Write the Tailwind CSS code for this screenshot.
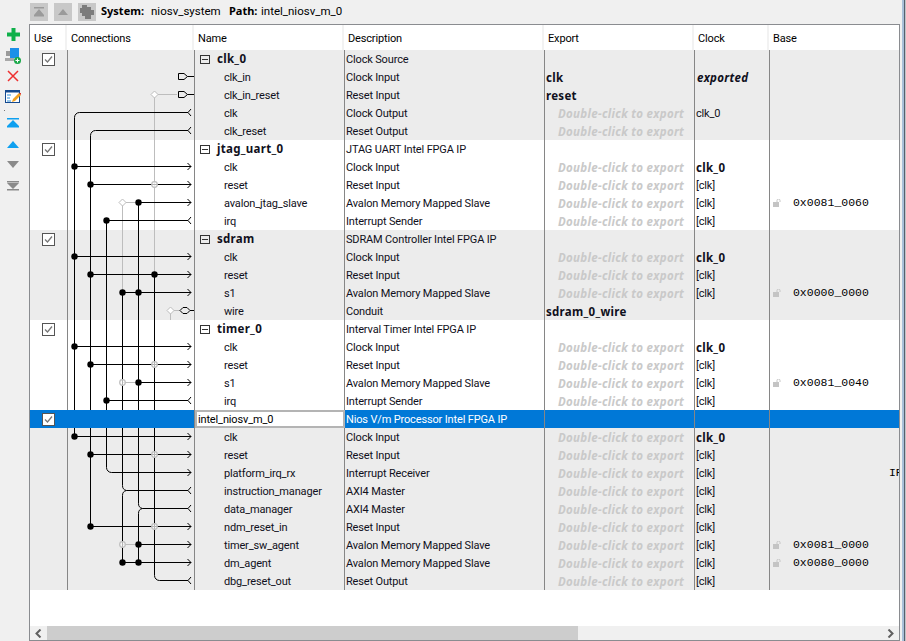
<!DOCTYPE html>
<html>
<head>
  <meta charset="utf-8" />
  <title>System Contents</title>
  <script src="https://cdn.jsdelivr.net/npm/@tailwindcss/browser@4"></script>
</head>
<body class="w-[906px] h-[641px] overflow-hidden bg-[#f0f0f0] font-['Roboto',sans-serif] text-[11px] tracking-[-0.150px] text-[#101020]">
  <!-- top toolbar -->
  <div class="h-[24px] pl-[30px] flex items-center gap-[6px]">
    <div class="w-[18px] h-[18px] bg-[#c8c8c8] flex items-center justify-center">
      <svg width="12" height="10" viewBox="0 0 12 10"><path d="M1 0h10v1.500H1zM6 2l5 6H1zM1 8h10v1.500H1z" fill="#9a9a9a"/></svg>
    </div>
    <div class="w-[18px] h-[18px] bg-[#c8c8c8] flex items-center justify-center">
      <svg width="12" height="8" viewBox="0 0 12 8"><path d="M6 1l5 6H1z" fill="#9a9a9a"/></svg>
    </div>
    <div class="w-[18px] h-[18px] bg-[#c8c8c8] flex items-center justify-center">
      <svg width="16" height="16" viewBox="0 0 16 16"><path d="M3 1h5v2h4v3h3v5h-3v4H6v-3H3V9H1V4h2z" fill="#7c7c7c"/></svg>
    </div>
    <div class="ml-[-1px] flex text-black text-[11.500px] tracking-[0px]">
      <span class="font-['Noto_Sans',sans-serif] text-[11px] font-bold w-[50px]">System:</span><span class="w-[78px]">niosv_system</span>
      <span class="font-['Noto_Sans',sans-serif] text-[11px] font-bold w-[32px]">Path:</span><span>intel_niosv_m_0</span>
    </div>
  </div>
  <div class="flex">
    <!-- left toolbar -->
    <div class="w-[29px] flex flex-col items-center pr-[2px] h-[617px]">
      <svg class="mt-[4px]" width="13" height="13" viewBox="0 0 13 13"><path d="M4.500 0h4v4.500H13v4H8.500V13h-4V8.500H0v-4h4.500z" fill="#0fb04a"/></svg>
      <svg class="mt-[7px]" width="16" height="16" viewBox="0 0 16 16"><rect x="0" y="10" width="9" height="3" fill="#a8a8a8"/><rect x="1" y="3" width="4" height="5" fill="#9a9a9a"/><rect x="5" y="0" width="9" height="10" fill="#1a90e8"/><circle cx="12.500" cy="12.500" r="3.500" fill="#18a848"/><path d="M10.500 12.500h4M12.500 10.500v4" stroke="#fff"/></svg>
      <svg class="mt-[6px]" width="12" height="12" viewBox="0 0 12 12"><path d="M1 1l10 10M11 1L1 11" stroke="#ee3030" stroke-width="1.500"/></svg>
      <svg class="mt-[8px]" width="16" height="14" viewBox="0 0 16 14"><rect x="0.500" y="0.500" width="14" height="12" fill="#fff" stroke="#14498f"/><rect x="0" y="0" width="15" height="2.500" fill="#14498f"/><path d="M2 5h4M2 8h3M2 11h4" stroke="#2a8cd8"/><path d="M7 12l1-3 6-6 2 2-6 6z" fill="#f0a020"/><path d="M14 3l2 2 0-2z" fill="#e03030"/></svg>
      <div class="mt-[6px] mr-[17px] w-[1px] h-[1px] bg-[#777]"></div>
      <svg class="mt-[7px]" width="12" height="10" viewBox="0 0 12 10"><path d="M0 0h12v1.500H0zM6 2l6 6H0zM0 8h12v1.500H0z" fill="#0ea0f0"/></svg>
      <svg class="mt-[13px]" width="12" height="7" viewBox="0 0 12 7"><path d="M6 0l6 7H0z" fill="#0ea0f0"/></svg>
      <svg class="mt-[13px]" width="12" height="7" viewBox="0 0 12 7"><path d="M0 0h12L6 7z" fill="#8a8a8a"/></svg>
      <svg class="mt-[13px]" width="12" height="10" viewBox="0 0 12 10"><path d="M0 0h12v1.500H0zM0 2h12L6 8zM0 8h12v1.500H0z" fill="#8a8a8a"/></svg>
    </div>
    <!-- table frame -->
    <div class="w-[872px] h-[617px] border border-[#8a8c90] bg-white flex flex-col overflow-hidden">
      <div class="h-[25px] grid grid-cols-[37px_127px_150px_200px_150px_75px_1fr] text-black">
        <div class="pl-[4px] leading-[28px] border-r-2 border-[#f2f2f2]">Use</div>
        <div class="pl-[4px] leading-[28px] border-r-2 border-[#f2f2f2]">Connections</div>
        <div class="pl-[4px] leading-[28px] border-r-2 border-[#f2f2f2]">Name</div>
        <div class="pl-[4px] leading-[28px] border-r-2 border-[#f2f2f2]">Description</div>
        <div class="pl-[4px] leading-[28px] border-r-2 border-[#f2f2f2]">Export</div>
        <div class="pl-[4px] leading-[28px] border-r-2 border-[#f2f2f2]">Clock</div>
        <div class="pl-[4px] leading-[28px]">Base</div>
      </div>
      <div class="relative h-[540px]">
        <div id="rows"></div>
        <svg id="wires" class="absolute left-[37px] top-0" width="127" height="540" viewBox="68 50 127 540"></svg>
      </div>
      <div class="flex-1"></div>
      <!-- horizontal scrollbar -->
      <div class="h-[14px] bg-[#f0f0f0] flex items-center">
        <div class="w-[17px] flex justify-center"><svg width="7" height="9" viewBox="0 0 7 9"><path d="M5.500 0.500L1.500 4.500l4 4" fill="none" stroke="#606060" stroke-width="2"/></svg></div>
        <div class="w-[531px] h-[14px] bg-[#cdcdcd]"></div>
        <div class="ml-auto w-[17px] flex justify-center"><svg width="7" height="9" viewBox="0 0 7 9"><path d="M1.500 0.500L5.500 4.500l-4 4" fill="none" stroke="#606060" stroke-width="2"/></svg></div>
      </div>
    </div>
    <!-- window edge -->
    <div class="w-[2px] ml-[2px] h-[641px] mt-[-24px] bg-[#a9c0d9]"></div>
    <div class="w-[1px] h-[641px] mt-[-24px] bg-[#55606e]"></div>
    <div class="w-[1px] h-[641px] mt-[-24px] bg-[#c0c4c8]"></div>
  </div>

  <script>
    const groups = [
      ['clk_0', 'Clock Source', [
        ['clk_in', 'Clock Input', 'clk', 'exported'],
        ['clk_in_reset', 'Reset Input', 'reset', ''],
        ['clk', 'Clock Output', '', 'clk_0'],
        ['clk_reset', 'Reset Output', '', '']]],
      ['jtag_uart_0', 'JTAG UART Intel FPGA IP', [
        ['clk', 'Clock Input', '', 'bold'],
        ['reset', 'Reset Input', '', '[clk]'],
        ['avalon_jtag_slave', 'Avalon Memory Mapped Slave', '', '[clk]', '0x0081_0060'],
        ['irq', 'Interrupt Sender', '', '[clk]']]],
      ['sdram', 'SDRAM Controller Intel FPGA IP', [
        ['clk', 'Clock Input', '', 'bold'],
        ['reset', 'Reset Input', '', '[clk]'],
        ['s1', 'Avalon Memory Mapped Slave', '', '[clk]', '0x0000_0000'],
        ['wire', 'Conduit', 'sdram_0_wire', '']]],
      ['timer_0', 'Interval Timer Intel FPGA IP', [
        ['clk', 'Clock Input', '', 'bold'],
        ['reset', 'Reset Input', '', '[clk]'],
        ['s1', 'Avalon Memory Mapped Slave', '', '[clk]', '0x0081_0040'],
        ['irq', 'Interrupt Sender', '', '[clk]']]],
      ['intel_niosv_m_0', 'Nios V/m Processor Intel FPGA IP', [
        ['clk', 'Clock Input', '', 'bold'],
        ['reset', 'Reset Input', '', '[clk]'],
        ['platform_irq_rx', 'Interrupt Receiver', '', '[clk]', '', 'IRQ 0'],
        ['instruction_manager', 'AXI4 Master', '', '[clk]'],
        ['data_manager', 'AXI4 Master', '', '[clk]'],
        ['ndm_reset_in', 'Reset Input', '', '[clk]'],
        ['timer_sw_agent', 'Avalon Memory Mapped Slave', '', '[clk]', '0x0081_0000'],
        ['dm_agent', 'Avalon Memory Mapped Slave', '', '[clk]', '0x0080_0000'],
        ['dbg_reset_out', 'Reset Output', '', '[clk]']]],
    ];

    const rowCls = 'h-[18px] leading-[18px] grid grid-rows-[18px] grid-cols-[38px_127px_150px_200px_150px_75px_1fr]';
    const lineCls = 'border-r border-[#868686]';
    const boldCls = "font-['Noto_Sans',sans-serif] text-[11.500px] font-bold tracking-[0.300px]";
    const monoCls = "font-['Liberation_Mono',monospace] text-[11.500px] tracking-[0px] text-black";
    const lock = `<svg class="absolute left-[3px] top-[5px]" width="9" height="8" viewBox="0 0 9 8"><rect x="0" y="3" width="6" height="5" fill="#c4c4c4"/><path d="M4 3V1.500a1.500 1.500 0 0 1 3 0V3" fill="none" stroke="#c4c4c4"/></svg>`;

    function checkbox() {
      return `<div class="w-[13px] h-[13px] border border-[#555] bg-white flex items-center justify-center"><svg width="11" height="11" viewBox="0 0 11 11"><path d="M2 5.500l2.500 2.500L9 2.500" fill="none" stroke="#777" stroke-width="1.300"/></svg></div>`;
    }

    function subRow(r, shade) {
      const clock = r[3] === 'bold' ? `<span class="${boldCls}">clk_0</span>`
        : r[3] === 'exported' ? `<span class="${boldCls} italic pl-[1px]">exported</span>` : r[3];
      const exp = r[2] ? `<span class="${boldCls}">${r[2]}</span>`
        : `<span class="${boldCls} pl-[12px] italic text-[#c9c9c9]">Double-click to export</span>`;
      let base = '';
      if (r[4]) base = lock + `<span class="absolute left-[23px] ${monoCls}">${r[4]}</span>`;
      if (r[5]) base = `<span class="absolute left-[119px] ${monoCls} whitespace-nowrap">${r[5]}</span>`;
      return `<div class="${rowCls} ${shade}">
        <div class="${lineCls}"></div><div class="${lineCls}"></div>
        <div class="${lineCls} pl-[29px] pt-[1px]">${r[0]}</div>
        <div class="${lineCls} pl-[1px] pt-[1px]">${r[1]}</div>
        <div class="${lineCls} pl-[1px] pt-[1px]">${exp}</div>
        <div class="${lineCls} pl-[1px] pt-[1px]">${clock}</div>
        <div class="relative overflow-hidden">${base}</div>
      </div>`;
    }

    function headRow(g, shade) {
      return `<div class="${rowCls} ${shade}">
        <div class="${lineCls} flex items-center justify-center">${checkbox()}</div><div class="${lineCls}"></div>
        <div class="${lineCls} flex items-center pl-[5px]">
          <div class="w-[10px] h-[9px] border border-[#333] flex items-center justify-center"><div class="w-[6px] h-[1px] bg-[#333]"></div></div>
          <span class="${boldCls} ml-[7px]">${g[0]}</span>
        </div>
        <div class="${lineCls} pl-[1px] pt-[1px]">${g[1]}</div>
        <div class="${lineCls}"></div><div class="${lineCls}"></div><div></div>
      </div>`;
    }

    function selectedRow(g) {
      return `<div class="${rowCls} bg-[#0078d7]">
        <div class="${lineCls} flex items-center justify-center">${checkbox()}</div><div class="${lineCls}"></div>
        <div class="border-2 border-[#b4b4b4] bg-white text-black leading-[16px] pl-[1px] w-[150px]">${g[0]}</div>
        <div class="${lineCls} pl-[1px] pt-[1px] text-white">${g[1]}</div>
        <div class="${lineCls}"></div><div class="${lineCls}"></div><div></div>
      </div>`;
    }

    document.querySelector('#rows').innerHTML = groups.map((g, i) => {
      const shade = i % 2 ? 'bg-white' : 'bg-[#ececec]';
      const head = i === 4 ? selectedRow(g) : headRow(g, shade);
      return head + g[2].map(r => subRow(r, shade)).join('');
    }).join('');

    // connection wires, rows are 18px apart
    const X = { a: 75.5, b: 91.5, c: 107.5, d: 123.5, e: 139.5, f: 155.5, g: 171.5 };
    const Y = n => 58.5 + 18 * n;
    const BLACK = '#000', GRAY = '#bdbdbd';
    let s = '';
    const path = (d, c) => { s += `<path d="${d}" fill="none" stroke="${c}"/>`; };
    const dot = (x, n) => { s += `<circle cx="${x}" cy="${Y(n)}" r="3.200" fill="#000"/>`; };
    const ring = (x, n) => { s += `<circle cx="${x}" cy="${Y(n)}" r="2.800" fill="#fff" fill-opacity="0.700" stroke="${GRAY}" stroke-width="1.200"/>`; };
    const diamond = (x, n) => { const y = Y(n); s += `<path d="M${x} ${y - 3.500}l3.500 3.500-3.500 3.500-3.500-3.500z" fill="#fff" stroke="${GRAY}"/>`; };
    const out = n => path(`M188.500 ${Y(n) - 3.500}L192 ${Y(n)}l-3.500 3.500`, BLACK);
    const inn = n => path(`M192 ${Y(n) - 3.500}L189 ${Y(n)}l3 3.500`, BLACK);
    const h = (x, n) => path(`M${x} ${Y(n)}H192`, BLACK);
    const hi = (x, n) => path(`M${x} ${Y(n)}H189`, BLACK);

    // gray verticals first
    path(`M${X.f} ${Y(2)}V${Y(12)}`, GRAY);
    path(`M${X.f} ${Y(2)}H178`, GRAY);
    path(`M${X.d} ${Y(8)}V${Y(13)}`, GRAY);
    path(`M${X.g} ${Y(14)}V320`, GRAY);
    path(`M${X.g} ${Y(14)}H181`, GRAY);
    path(`M${X.d} ${Y(8)}H${X.e}`, GRAY);
    path(`M${X.d} ${Y(18)}H${X.e}`, GRAY);
    path(`M${X.d} ${Y(27)}H${X.e}`, GRAY);

    // black buses
    path(`M189 ${Y(3)}H80.500a5 5 0 0 0-5 5V${Y(21)}`, BLACK);
    path(`M189 ${Y(4)}H96.500a5 5 0 0 0-5 5V${Y(26)}`, BLACK);
    path(`M${X.c} ${Y(9)}V${Y(23) - 5}a5 5 0 0 0 5 5H192`, BLACK);
    path(`M${X.d} ${Y(13)}V${Y(24) - 5}a5 5 0 0 0 4 5M${X.d} ${Y(28)}V${Y(24) + 5}a5 5 0 0 1 4-5H189`, BLACK);
    path(`M${X.e} ${Y(8)}V${Y(25) - 5}a5 5 0 0 0 4 5M${X.e} ${Y(28)}V${Y(25) + 5}a5 5 0 0 1 4-5H189`, BLACK);
    path(`M${X.f} ${Y(12)}V${Y(29) - 5}a5 5 0 0 0 5 5H189`, BLACK);

    // horizontals
    [[6, 'a'], [7, 'b'], [8, 'e'], [11, 'a'], [12, 'b'], [13, 'd'], [16, 'a'], [17, 'b'], [18, 'e'], [21, 'a'], [22, 'b'], [26, 'b'], [27, 'e'], [28, 'd']]
      .forEach(([n, k]) => { h(X[k], n); out(n); dot(X[k], n); });
    [9, 19].forEach(n => { hi(X.c, n); dot(X.c, n); });
    [3, 4, 9, 19, 24, 25, 29].forEach(inn);
    out(23);
    dot(X.e, 13); dot(X.f, 12); dot(X.e, 28);

    // unconnected crossings
    [[X.f, 7], [X.f, 17], [X.f, 22], [X.f, 26], [X.d, 18], [X.d, 27]].forEach(([x, n]) => ring(x, n));
    [[X.f, 2], [X.d, 8], [X.g, 14]].forEach(([x, n]) => diamond(x, n));

    // exported interface stubs
    [1, 2].forEach(n => path(`M179.500 ${Y(n) - 3}H185l3.500 3-3.500 3H179.500zM188.500 ${Y(n)}H195`, BLACK));
    path(`M181 ${Y(14)}l3-3h4l3 3-3 3h-4zM191 ${Y(14)}H195`, BLACK);

    // selected row paints over the wires
    s += `<rect x="68" y="410" width="126" height="18" fill="#0078d7"/>`;
    document.querySelector('#wires').innerHTML = s;
  </script>
</body>
</html>
